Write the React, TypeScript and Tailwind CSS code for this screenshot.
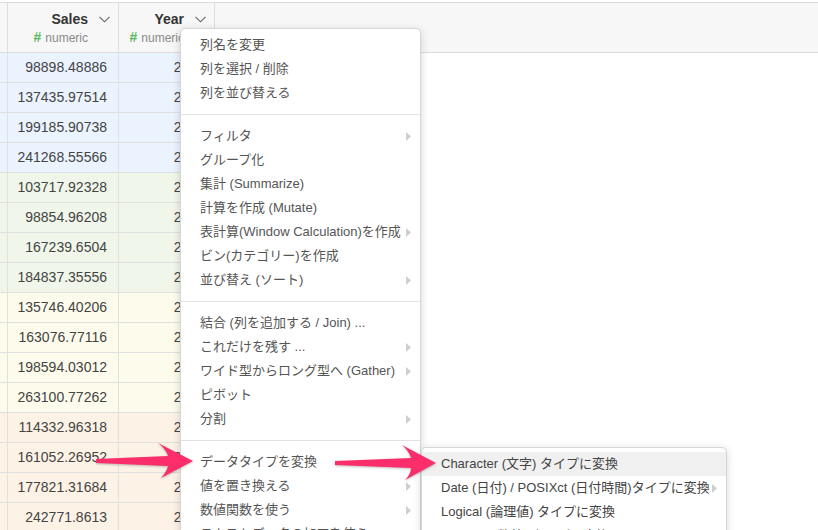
import React from 'react';

type Row = { sales: string; year: string; bg: string };

const rows: Row[] = [
  { sales: '98898.48886', year: '2015', bg: 'bg-[#ebf3fe]' },
  { sales: '137435.97514', year: '2016', bg: 'bg-[#ebf3fe]' },
  { sales: '199185.90738', year: '2017', bg: 'bg-[#ebf3fe]' },
  { sales: '241268.55566', year: '2018', bg: 'bg-[#ebf3fe]' },
  { sales: '103717.92328', year: '2015', bg: 'bg-[#f0f6ea]' },
  { sales: '98854.96208', year: '2016', bg: 'bg-[#f0f6ea]' },
  { sales: '167239.6504', year: '2017', bg: 'bg-[#f0f6ea]' },
  { sales: '184837.35556', year: '2018', bg: 'bg-[#f0f6ea]' },
  { sales: '135746.40206', year: '2015', bg: 'bg-[#fdfbeb]' },
  { sales: '163076.77116', year: '2016', bg: 'bg-[#fdfbeb]' },
  { sales: '198594.03012', year: '2017', bg: 'bg-[#fdfbeb]' },
  { sales: '263100.77262', year: '2018', bg: 'bg-[#fdfbeb]' },
  { sales: '114332.96318', year: '2015', bg: 'bg-[#fcf2e6]' },
  { sales: '161052.26952', year: '2016', bg: 'bg-[#fcf2e6]' },
  { sales: '177821.31684', year: '2017', bg: 'bg-[#fcf2e6]' },
  { sales: '242771.8613', year: '2018', bg: 'bg-[#fcf2e6]' },
];

type Item = { label: string; sub?: boolean } | 'sep';

const menu: Item[] = [
  { label: '列名を変更' },
  { label: '列を選択 / 削除' },
  { label: '列を並び替える' },
  'sep',
  { label: 'フィルタ', sub: true },
  { label: 'グループ化' },
  { label: '集計 (Summarize)' },
  { label: '計算を作成 (Mutate)' },
  { label: '表計算(Window Calculation)を作成', sub: true },
  { label: 'ビン(カテゴリー)を作成' },
  { label: '並び替え (ソート)', sub: true },
  'sep',
  { label: '結合 (列を追加する / Join) ...' },
  { label: 'これだけを残す ...', sub: true },
  { label: 'ワイド型からロング型へ (Gather)', sub: true },
  { label: 'ピボット' },
  { label: '分割', sub: true },
  'sep',
  { label: 'データタイプを変換', sub: true },
  { label: '値を置き換える', sub: true },
  { label: '数値関数を使う', sub: true },
  { label: 'テキストデータの加工を使う', sub: true },
];

function Chevron() {
  return (
    <svg width="11" height="7" viewBox="0 0 11 7" className="shrink-0">
      <polyline points="0.5,0.8 5.5,5.8 10.5,0.8" fill="none" stroke="#666" strokeWidth="1.1" />
    </svg>
  );
}

function SubArrow() {
  return (
    <svg width="5" height="9" viewBox="0 0 5 9" className="shrink-0">
      <polygon points="0,0 5,4.5 0,9" fill="#cfcfcf" />
    </svg>
  );
}

function HeaderCell({ title }: { title: string }) {
  return (
    <div className="flex items-center justify-end gap-[11px] pr-[8px] border-r border-[#dedede]">
      <div className="flex flex-col items-end">
        <span className="text-[14px] font-bold text-[#333] leading-[18px]">{title}</span>
        <span className="text-[12px] text-[#8a8a8a] leading-[16px] mt-[1px]">
          <span className="text-[14px] text-[#5cb85c] font-bold mr-[4px]">#</span>numeric
        </span>
      </div>
      <div className="-mt-[16px]">
        <Chevron />
      </div>
    </div>
  );
}

export default function App() {
  return (
    <div
      className="relative w-[818px] h-[530px] overflow-hidden bg-white"
      style={{ fontFamily: '"Liberation Sans", "Noto Sans CJK JP", sans-serif' }}
    >
      <div className="pt-[2px]">
        <div className="grid grid-cols-[8px_111px_96px_1fr] h-[51px] bg-[#f7f7f7] border-y border-[#dcdcdc]">
          <div className="border-r border-[#dedede]" />
          <HeaderCell title="Sales" />
          <HeaderCell title="Year" />
          <div />
        </div>
        {rows.map((r, i) => (
          <div key={i} className="grid grid-cols-[8px_111px_96px_1fr] h-[30px]">
            <div className={`${r.bg} border-r border-b border-[#e0e0e0]`} />
            <div className={`${r.bg} border-r border-b border-[#e0e0e0] flex items-center justify-end pr-[11px] text-[14px] text-[#444]`}>
              {r.sales}
            </div>
            <div className={`${r.bg} border-r border-b border-[#e0e0e0] flex items-center justify-end pr-[9px] text-[14px] text-[#444]`}>
              {r.year}
            </div>
            <div />
          </div>
        ))}
      </div>

      {/* column menu */}
      <div className="absolute left-[180px] top-[28px] w-[241px] bg-white border border-[#d6d6d6] rounded-[5px] shadow-[0_2px_8px_rgba(0,0,0,0.16)] pt-[4px] pb-[4px]">
        {menu.map((m, i) =>
          m === 'sep' ? (
            <div key={i} className="h-px bg-[#e2e2e2] my-[9px]" />
          ) : (
            <div key={i} className="flex items-center justify-between h-[24px] pl-[19px] pr-[9px] text-[13px] text-[#555] whitespace-nowrap">
              <span>{m.label}</span>
              {m.sub && <SubArrow />}
            </div>
          )
        )}
      </div>

      {/* data type submenu */}
      <div className="absolute left-[421px] top-[447px] w-[306px] bg-white border border-[#d6d6d6] rounded-[5px] shadow-[0_2px_8px_rgba(0,0,0,0.16)] pt-[4px] pb-[4px]">
        <div className="flex items-center h-[24px] pl-[19px] pr-[9px] bg-[#f0f0f0] text-[13px] text-[#444] whitespace-nowrap">
          Character (文字) タイプに変換
        </div>
        <div className="flex items-center justify-between h-[24px] pl-[19px] pr-[9px] text-[13px] text-[#444] whitespace-nowrap">
          <span>Date (日付) / POSIXct (日付時間)タイプに変換</span>
          <SubArrow />
        </div>
        <div className="flex items-center h-[24px] pl-[19px] pr-[9px] text-[13px] text-[#444] whitespace-nowrap">
          Logical (論理値) タイプに変換
        </div>
        <div className="flex items-center h-[24px] pl-[19px] pr-[9px] text-[13px] text-[#444] whitespace-nowrap">
          Numeric (数値) タイプに変換
        </div>
      </div>

      {/* annotation arrows */}
      <svg className="absolute inset-0 pointer-events-none" width="818" height="530" viewBox="0 0 818 530">
        <g fill="#fb2d6a" style={{ filter: 'drop-shadow(0 1px 1px rgba(0,0,0,0.25))' }}>
          <path d="M 96 459 L 168 456 Q 166 449 158 443 L 193 461 L 161 478 Q 167 471 168 466 L 96 463 Z" />
          <path d="M 335 461 L 411 458 Q 409 451 402 445 L 436 463 L 405 480 Q 411 474 411 468 L 335 465 Z" />
        </g>
      </svg>
    </div>
  );
}
